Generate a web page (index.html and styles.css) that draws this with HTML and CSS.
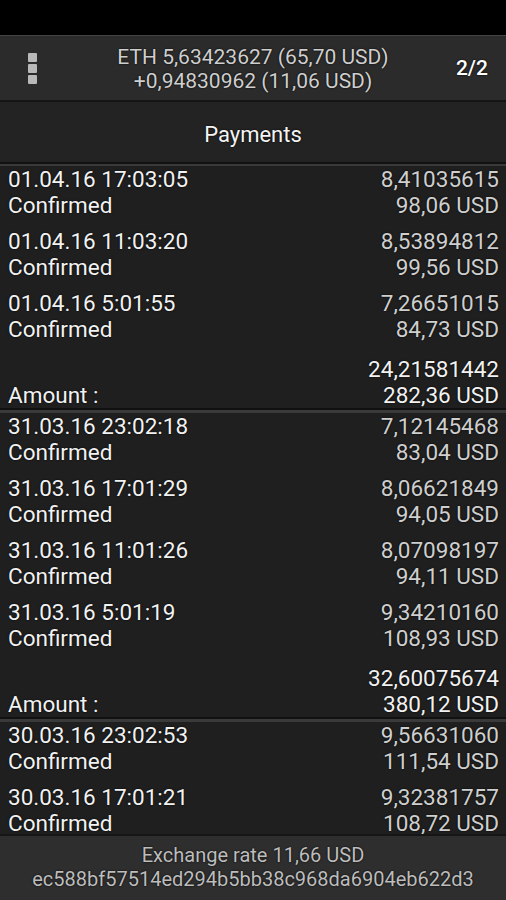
FILE: index.html
```html
<!DOCTYPE html>
<html lang="en">
<head>
  <meta charset="UTF-8">
  <meta name="viewport" content="width=device-width, initial-scale=1.0">
  <title>Payments</title>
  <link rel="stylesheet" href="styles.css">
</head>
<body>
  <div class="app">
    <div class="status-bar"></div>

    <!-- Balance header -->
    <div class="top-bar">
      <div class="menu-icon">
        <span></span><span></span><span></span>
      </div>
      <div class="balance">
        <div>ETH 5,63423627 (65,70 USD)</div>
        <div>+0,94830962 (11,06 USD)</div>
      </div>
      <div class="pager">2/2</div>
    </div>

    <div class="title">Payments</div>
    <div class="sep"></div>

    <!-- Payment list -->
    <div class="list">
      <div class="row">
        <div class="left"><div>01.04.16 17:03:05</div><div>Confirmed</div></div>
        <div class="right"><div>8,41035615</div><div>98,06 USD</div></div>
      </div>
      <div class="row">
        <div class="left"><div>01.04.16 11:03:20</div><div>Confirmed</div></div>
        <div class="right"><div>8,53894812</div><div>99,56 USD</div></div>
      </div>
      <div class="row">
        <div class="left"><div>01.04.16 5:01:55</div><div>Confirmed</div></div>
        <div class="right"><div>7,26651015</div><div>84,73 USD</div></div>
      </div>
      <div class="row total">
        <div class="left"><div>&nbsp;</div><div>Amount :</div></div>
        <div class="right"><div>24,21581442</div><div>282,36 USD</div></div>
      </div>
      <div class="sep"></div>

      <div class="row">
        <div class="left"><div>31.03.16 23:02:18</div><div>Confirmed</div></div>
        <div class="right"><div>7,12145468</div><div>83,04 USD</div></div>
      </div>
      <div class="row">
        <div class="left"><div>31.03.16 17:01:29</div><div>Confirmed</div></div>
        <div class="right"><div>8,06621849</div><div>94,05 USD</div></div>
      </div>
      <div class="row">
        <div class="left"><div>31.03.16 11:01:26</div><div>Confirmed</div></div>
        <div class="right"><div>8,07098197</div><div>94,11 USD</div></div>
      </div>
      <div class="row">
        <div class="left"><div>31.03.16 5:01:19</div><div>Confirmed</div></div>
        <div class="right"><div>9,34210160</div><div>108,93 USD</div></div>
      </div>
      <div class="row total">
        <div class="left"><div>&nbsp;</div><div>Amount :</div></div>
        <div class="right"><div>32,60075674</div><div>380,12 USD</div></div>
      </div>
      <div class="sep"></div>

      <div class="row">
        <div class="left"><div>30.03.16 23:02:53</div><div>Confirmed</div></div>
        <div class="right"><div>9,56631060</div><div>111,54 USD</div></div>
      </div>
      <div class="row">
        <div class="left"><div>30.03.16 17:01:21</div><div>Confirmed</div></div>
        <div class="right"><div>9,32381757</div><div>108,72 USD</div></div>
      </div>
    </div>

    <!-- Footer -->
    <div class="footer">
      <div>Exchange rate 11,66 USD</div>
      <div>ec588bf57514ed294b5bb38c968da6904eb622d3</div>
    </div>
  </div>
</body>
</html>
```
FILE: styles.css
```css
body {
  margin: 0;
  background: #000;
  font-family: Roboto, "Liberation Sans", sans-serif;
}

.app {
  width: 506px;
  height: 900px;
  display: flex;
  flex-direction: column;
  overflow: hidden;
  background: #1f1f1f;
}

.status-bar {
  height: 35px;
  background: #000;
  flex-shrink: 0;
}

.top-bar {
  height: 64px;
  display: flex;
  align-items: center;
  background: #2b2b2b;
  border-top: 1px solid #444;
  border-bottom: 2px solid #151515;
  flex-shrink: 0;
}

.menu-icon {
  width: 66px;
  display: flex;
  flex-direction: column;
  align-items: flex-start;
  gap: 2px;
  padding-left: 28px;
  box-sizing: border-box;
}

.menu-icon span {
  width: 9px;
  height: 9px;
  background: #b9b9b9;
  border-radius: 1px;
}

.balance {
  flex: 1;
  text-align: center;
  color: #cfcfcf;
  font-size: 21px;
  line-height: 24px;
  padding-top: 2px;
  text-shadow: 0 0 2px #000;
}

.pager {
  width: 66px;
  text-align: right;
  padding-right: 18px;
  box-sizing: border-box;
  color: #fff;
  font-size: 21px;
  font-weight: 500;
  text-shadow: 0 0 2px #000;
}

.title {
  height: 60px;
  display: flex;
  align-items: center;
  justify-content: center;
  padding-top: 4px;
  box-sizing: border-box;
  background: #232323;
  color: #f4f4f4;
  font-size: 22px;
  text-shadow: 0 0 2px #000;
  flex-shrink: 0;
}

.sep {
  height: 2px;
  background: #3a3a3a;
  border-top: 2px solid #111;
  flex-shrink: 0;
}

.list {
  flex: 1;
  overflow: hidden;
}

.list .sep {
  height: 3px;
}

.row {
  display: flex;
  justify-content: space-between;
  padding: 0 7px 10px 8px;
  font-size: 22.5px;
  line-height: 26px;
  text-shadow: 0 0 2px #000;
}

.row .left {
  color: #f2f2f2;
}

.row .right {
  color: #cfcfcf;
  text-align: right;
}

.row.total {
  padding-top: 4px;
  padding-bottom: 0;
}

.row.total .right {
  color: #f2f2f2;
}

.footer {
  height: 66px;
  flex-shrink: 0;
  background: #2e2e2e;
  border-top: 2px solid #161616;
  box-sizing: border-box;
  padding-top: 7px;
  text-align: center;
  color: #bdbdbd;
  font-size: 20px;
  line-height: 24px;
  text-shadow: 0 0 2px #000;
}
```
